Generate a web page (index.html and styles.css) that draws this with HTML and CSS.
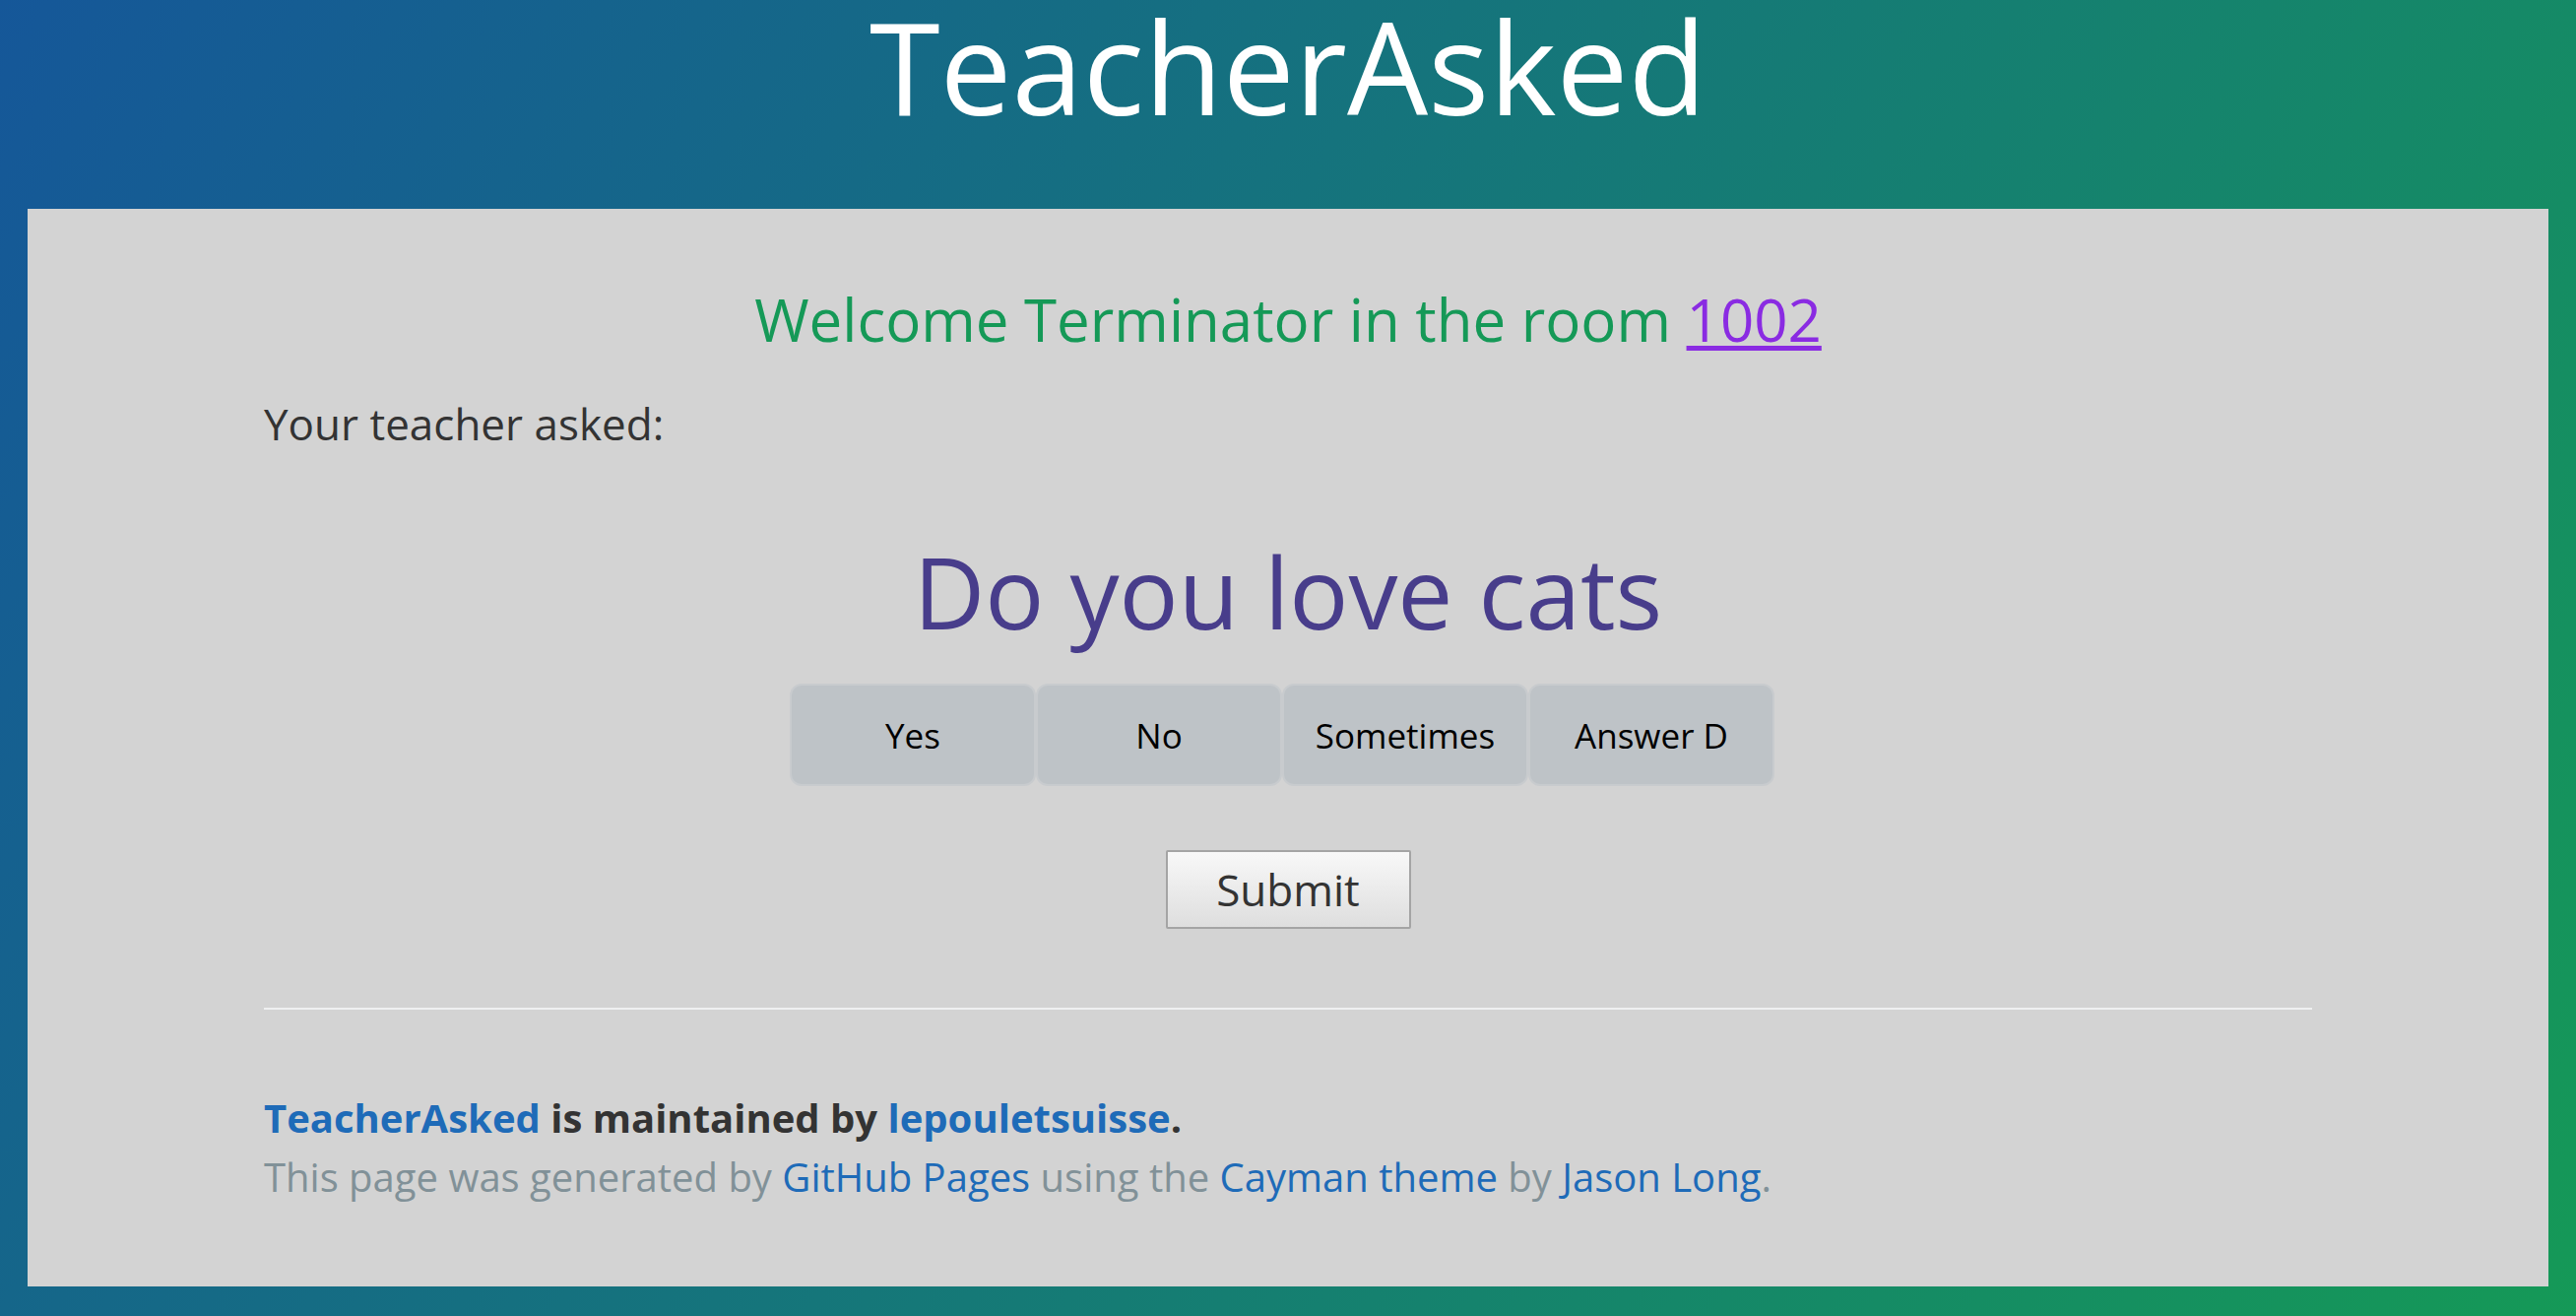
FILE: index.html
```html
<!DOCTYPE html>
<html lang="en">
<head>
<meta charset="utf-8">
<title>TeacherAsked</title>
<link rel="stylesheet" href="styles.css">
</head>
<body>
  <header class="page-header">
    <h1 class="project-name">TeacherAsked</h1>
  </header>
  <main class="main-content">
    <div class="inner">
      <h2 class="welcome">Welcome Terminator in the room <a class="room-link" href="#">1002</a></h2>
      <p class="asked">Your teacher asked:</p>
      <h1 class="question">Do you love cats</h1>
      <div class="answers">
        <button class="answer">Yes</button>
        <button class="answer">No</button>
        <button class="answer">Sometimes</button>
        <button class="answer">Answer D</button>
      </div>
      <div class="submit-row">
        <button class="submit">Submit</button>
      </div>
      <footer class="site-footer">
        <span class="footer-owner"><a href="#">TeacherAsked</a> is maintained by <a href="#">lepouletsuisse</a>.</span>
        <span class="footer-credits">This page was generated by <a href="#">GitHub Pages</a> using the <a href="#">Cayman theme</a> by <a href="#">Jason Long</a>.</span>
      </footer>
    </div>
  </main>
</body>
</html>
```

FILE: styles.css
```css
html, body {
  margin: 0;
  padding: 0;
}

body {
  font-family: "Open Sans", "Liberation Sans", sans-serif;
  background: linear-gradient(120deg, #155799, #159957);
  min-height: 1336px;
  color: #333;
}

.page-header {
  text-align: center;
  padding-top: 2px;
  padding-bottom: 80px;
}

.project-name {
  margin: 0;
  font-size: 130px;
  line-height: 130px;
  font-weight: 400;
  color: #fff;
}

.main-content {
  box-sizing: border-box;
  max-width: 2560px;
  margin: 0 auto;
  background: #d3d3d3;
  padding: 72px 240px 81px;
}

.inner {
  display: flex;
  flex-direction: column;
}

.welcome {
  margin: 0;
  text-align: center;
  font-size: 60px;
  line-height: 80px;
  font-weight: 400;
  color: #159957;
}

.room-link {
  color: #8a2be2;
  text-decoration: underline;
  text-decoration-thickness: 5px;
  text-underline-offset: 4px;
}

.asked {
  margin: 33px 0 0;
  font-size: 44px;
  line-height: 66px;
  color: #333;
}

.question {
  margin: 77px 0 0;
  text-align: center;
  font-size: 100px;
  line-height: 120px;
  font-weight: 400;
  color: #483d8b;
}

.answers {
  margin-top: 36px;
  padding-right: 12px;
  display: flex;
  justify-content: center;
  gap: 4px;
}

.answer {
  width: 246px;
  height: 100px;
  border: none;
  border-radius: 10px;
  background: #bec3c7;
  box-shadow: 0 0 0 2px #c8cbce;
  font-family: "Open Sans", "Liberation Sans", sans-serif;
  font-size: 35px;
  color: #000;
  padding: 0;
}

.submit-row {
  margin-top: 67px;
  display: flex;
  justify-content: center;
}

.submit {
  width: 249px;
  height: 80px;
  border: 2px solid #a4a4a4;
  border-radius: 2px;
  background: linear-gradient(#f8f8f8, #dedede);
  font-family: "Open Sans", "Liberation Sans", sans-serif;
  font-size: 44px;
  color: #333;
  padding: 0;
}

.site-footer {
  margin-top: 80px;
  padding-top: 80px;
  border-top: 2px solid #eff0f1;
  display: flex;
  flex-direction: column;
  font-size: 40px;
  line-height: 60px;
}

.site-footer a {
  color: #1e6bb8;
  text-decoration: none;
}

.footer-owner {
  font-weight: 700;
  color: #333;
}

.footer-credits {
  color: #819198;
}
```
